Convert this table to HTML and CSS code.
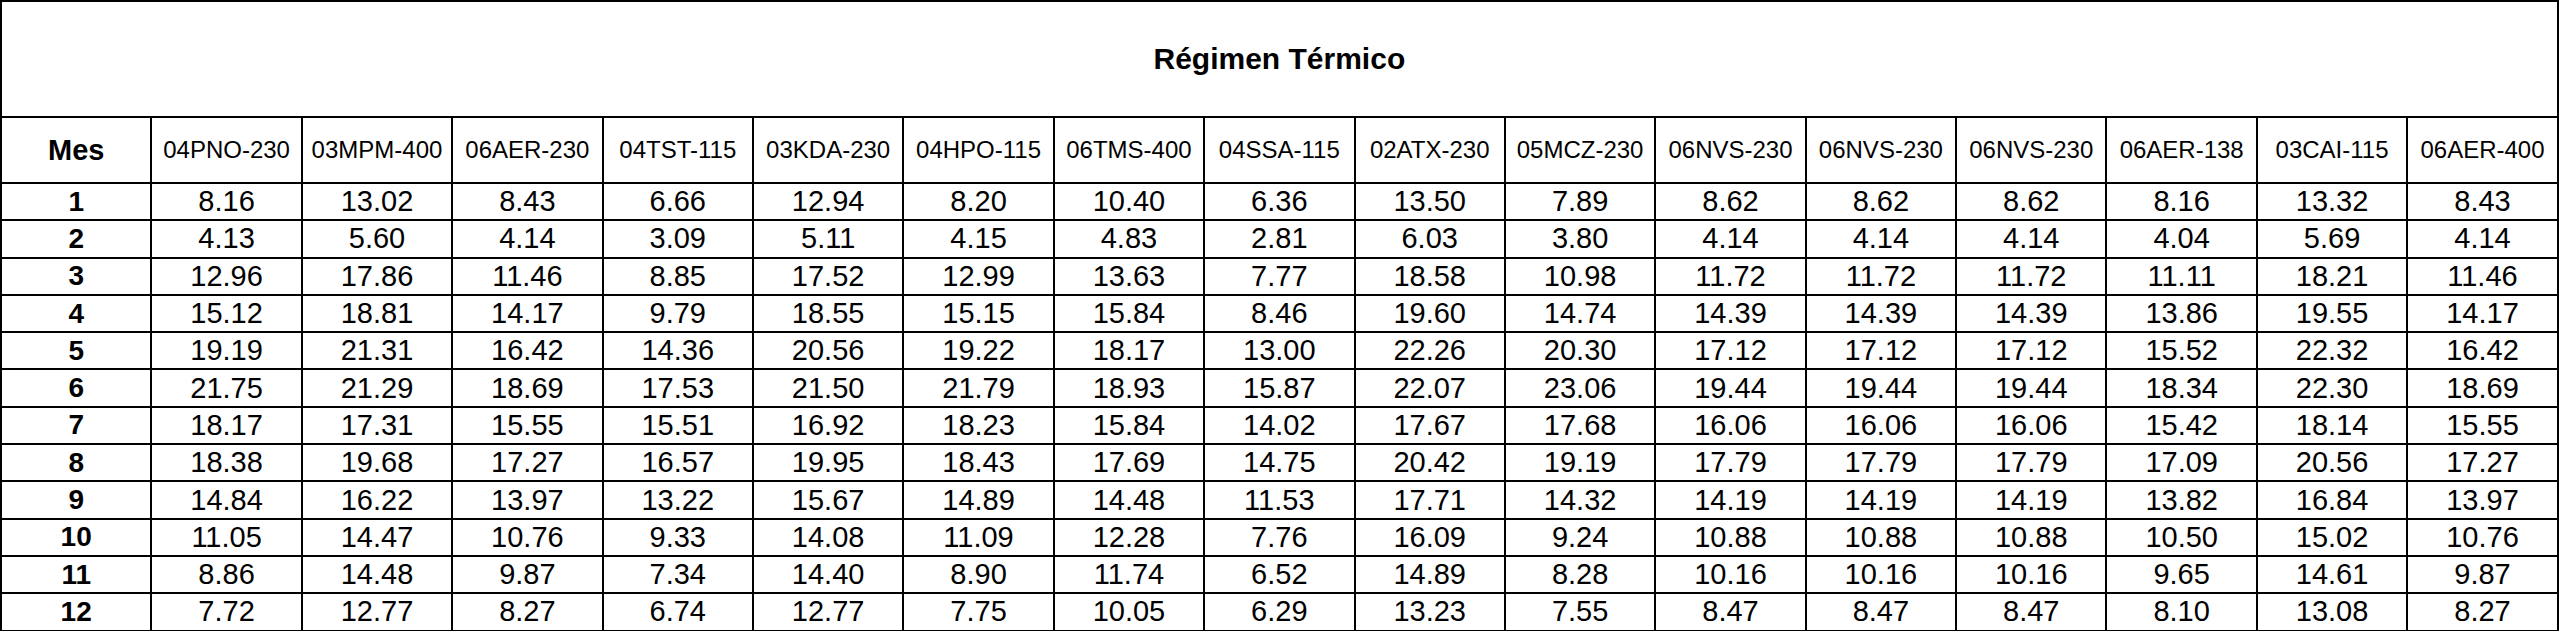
FILE: index.html
```html
<!DOCTYPE html>
<html lang="es">
<head>
<meta charset="utf-8">
<title>Régimen Térmico</title>
<link rel="stylesheet" href="styles.css">
</head>
<body>
<table class="grid">
<colgroup><col span="17" class="col"></colgroup>
<tr class="title-row"><th colspan="17" class="title">Régimen Térmico</th></tr>
<tr class="head-row"><th class="mes">Mes</th><th>04PNO-230</th><th>03MPM-400</th><th>06AER-230</th><th>04TST-115</th><th>03KDA-230</th><th>04HPO-115</th><th>06TMS-400</th><th>04SSA-115</th><th>02ATX-230</th><th>05MCZ-230</th><th>06NVS-230</th><th>06NVS-230</th><th>06NVS-230</th><th>06AER-138</th><th>03CAI-115</th><th>06AER-400</th></tr>
<tr class="data-row"><th>1</th><td>8.16</td><td>13.02</td><td>8.43</td><td>6.66</td><td>12.94</td><td>8.20</td><td>10.40</td><td>6.36</td><td>13.50</td><td>7.89</td><td>8.62</td><td>8.62</td><td>8.62</td><td>8.16</td><td>13.32</td><td>8.43</td></tr>
<tr class="data-row"><th>2</th><td>4.13</td><td>5.60</td><td>4.14</td><td>3.09</td><td>5.11</td><td>4.15</td><td>4.83</td><td>2.81</td><td>6.03</td><td>3.80</td><td>4.14</td><td>4.14</td><td>4.14</td><td>4.04</td><td>5.69</td><td>4.14</td></tr>
<tr class="data-row"><th>3</th><td>12.96</td><td>17.86</td><td>11.46</td><td>8.85</td><td>17.52</td><td>12.99</td><td>13.63</td><td>7.77</td><td>18.58</td><td>10.98</td><td>11.72</td><td>11.72</td><td>11.72</td><td>11.11</td><td>18.21</td><td>11.46</td></tr>
<tr class="data-row"><th>4</th><td>15.12</td><td>18.81</td><td>14.17</td><td>9.79</td><td>18.55</td><td>15.15</td><td>15.84</td><td>8.46</td><td>19.60</td><td>14.74</td><td>14.39</td><td>14.39</td><td>14.39</td><td>13.86</td><td>19.55</td><td>14.17</td></tr>
<tr class="data-row"><th>5</th><td>19.19</td><td>21.31</td><td>16.42</td><td>14.36</td><td>20.56</td><td>19.22</td><td>18.17</td><td>13.00</td><td>22.26</td><td>20.30</td><td>17.12</td><td>17.12</td><td>17.12</td><td>15.52</td><td>22.32</td><td>16.42</td></tr>
<tr class="data-row"><th>6</th><td>21.75</td><td>21.29</td><td>18.69</td><td>17.53</td><td>21.50</td><td>21.79</td><td>18.93</td><td>15.87</td><td>22.07</td><td>23.06</td><td>19.44</td><td>19.44</td><td>19.44</td><td>18.34</td><td>22.30</td><td>18.69</td></tr>
<tr class="data-row"><th>7</th><td>18.17</td><td>17.31</td><td>15.55</td><td>15.51</td><td>16.92</td><td>18.23</td><td>15.84</td><td>14.02</td><td>17.67</td><td>17.68</td><td>16.06</td><td>16.06</td><td>16.06</td><td>15.42</td><td>18.14</td><td>15.55</td></tr>
<tr class="data-row"><th>8</th><td>18.38</td><td>19.68</td><td>17.27</td><td>16.57</td><td>19.95</td><td>18.43</td><td>17.69</td><td>14.75</td><td>20.42</td><td>19.19</td><td>17.79</td><td>17.79</td><td>17.79</td><td>17.09</td><td>20.56</td><td>17.27</td></tr>
<tr class="data-row"><th>9</th><td>14.84</td><td>16.22</td><td>13.97</td><td>13.22</td><td>15.67</td><td>14.89</td><td>14.48</td><td>11.53</td><td>17.71</td><td>14.32</td><td>14.19</td><td>14.19</td><td>14.19</td><td>13.82</td><td>16.84</td><td>13.97</td></tr>
<tr class="data-row"><th>10</th><td>11.05</td><td>14.47</td><td>10.76</td><td>9.33</td><td>14.08</td><td>11.09</td><td>12.28</td><td>7.76</td><td>16.09</td><td>9.24</td><td>10.88</td><td>10.88</td><td>10.88</td><td>10.50</td><td>15.02</td><td>10.76</td></tr>
<tr class="data-row"><th>11</th><td>8.86</td><td>14.48</td><td>9.87</td><td>7.34</td><td>14.40</td><td>8.90</td><td>11.74</td><td>6.52</td><td>14.89</td><td>8.28</td><td>10.16</td><td>10.16</td><td>10.16</td><td>9.65</td><td>14.61</td><td>9.87</td></tr>
<tr class="data-row"><th>12</th><td>7.72</td><td>12.77</td><td>8.27</td><td>6.74</td><td>12.77</td><td>7.75</td><td>10.05</td><td>6.29</td><td>13.23</td><td>7.55</td><td>8.47</td><td>8.47</td><td>8.47</td><td>8.10</td><td>13.08</td><td>8.27</td></tr>
</table>
</body>
</html>
```

FILE: styles.css
```css
html, body {
  margin: 0;
  padding: 0;
  background: #fff;
}

body {
  font-family: "Liberation Sans", Arial, sans-serif;
  color: #000;
}

.grid {
  border-collapse: collapse;
  table-layout: fixed;
  width: 2557px;
}

.col {
  width: 150.4px;
}

.grid th,
.grid td {
  border: 2px solid #000;
  padding: 0;
  text-align: center;
  vertical-align: middle;
  line-height: 1;
  white-space: nowrap;
  overflow: hidden;
}

.grid .data-row {
  height: 37.3px;
}

.grid td {
  font-size: 29px;
  font-weight: normal;
}

.grid th {
  font-size: 28px;
  font-weight: bold;
}

.grid .title-row {
  height: 116px;
}

.grid .title {
  font-size: 30px;
  font-weight: bold;
}

.grid .head-row {
  height: 66px;
}

.grid .head-row th {
  font-size: 24px;
  font-weight: normal;
}

.grid .head-row th.mes {
  font-size: 29px;
  font-weight: bold;
}
```
